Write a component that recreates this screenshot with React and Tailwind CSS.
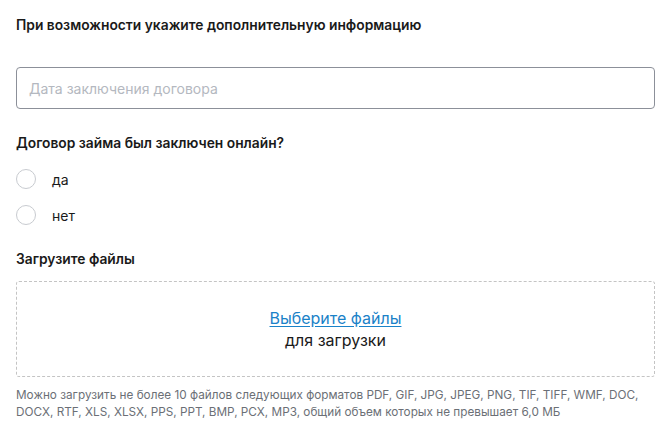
export default function App() {
  return (
    <div className="w-[671px] h-[439px] bg-white px-4 pt-[15px]" style={{ fontFamily: "Inter, 'Noto Sans', sans-serif" }}>
      <div className="text-[13.8px] font-semibold leading-[20px] text-[#1a1a1a]">При возможности укажите дополнительную информацию</div>
      <div className="mt-[32px] h-[42px] border border-[#8c9099] rounded-[4px] flex items-center px-3">
        <span className="text-[14px] text-[#b4b8c0]">Дата заключения договора</span>
      </div>
      <div className="mt-[24px] text-[13.8px] font-semibold leading-[20px] text-[#1a1a1a]">Договор займа был заключен онлайн?</div>
      <div className="mt-[16px] flex flex-col gap-[16px]">
        <div className="flex items-center h-[20px]">
          <span className="w-[20px] h-[20px] rounded-full border border-[#c8cbd0]"></span>
          <span className="ml-4 text-[14px] text-[#1a1a1a]">да</span>
        </div>
        <div className="flex items-center h-[20px]">
          <span className="w-[20px] h-[20px] rounded-full border border-[#c8cbd0]"></span>
          <span className="ml-4 text-[14px] text-[#1a1a1a]">нет</span>
        </div>
      </div>
      <div className="mt-[24px] text-[13.8px] font-semibold leading-[20px] text-[#1a1a1a]">Загрузите файлы</div>
      <div className="mt-[12px] h-[96px] border border-dashed border-[#c4c4c4] rounded-[3px] flex flex-col items-center justify-center">
        <a className="text-[16px] leading-[22px] text-[#1a82c8] underline underline-offset-2">Выберите файлы</a>
        <span className="text-[16px] leading-[22px] text-[#1a1a1a]">для загрузки</span>
      </div>
      <div className="mt-[10px] text-[11.75px] leading-[16.5px] text-[#6b6f76]">
        Можно загрузить не более 10 файлов следующих форматов PDF, GIF, JPG, JPEG, PNG, TIF, TIFF, WMF, DOC, DOCX, RTF, XLS, XLSX, PPS, PPT, BMP, PCX, MP3, общий объем которых не превышает 6,0 МБ
      </div>
    </div>
  );
}
